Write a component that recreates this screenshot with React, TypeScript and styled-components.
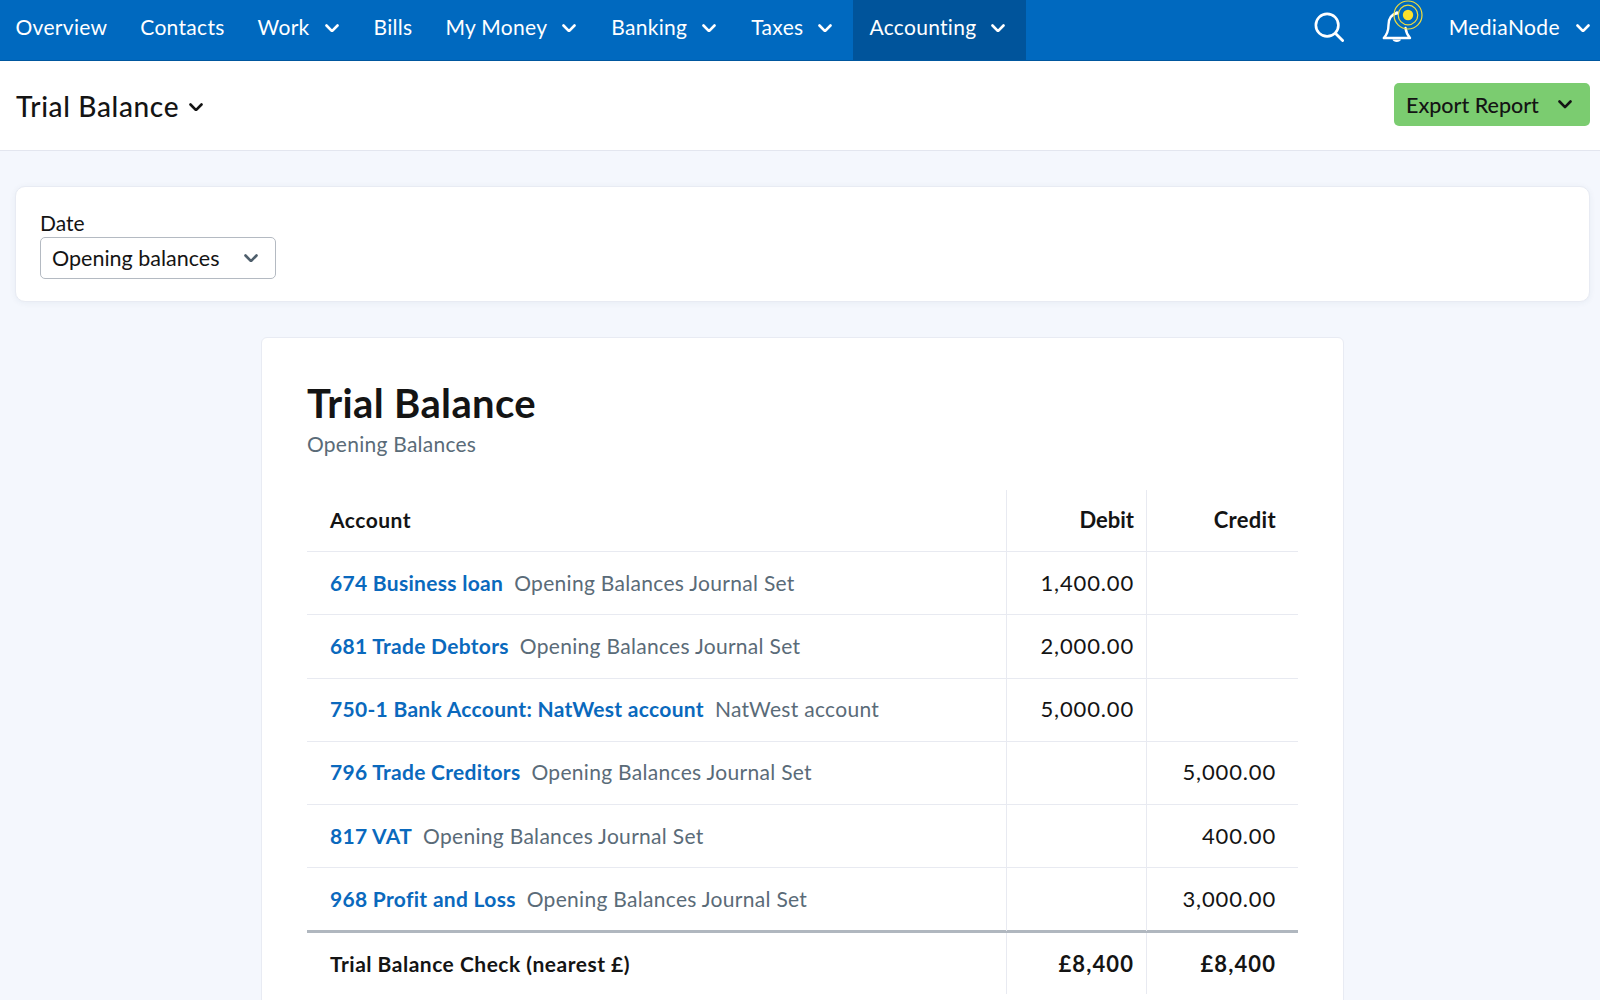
import React from 'react';
import styled, { createGlobalStyle } from 'styled-components';

const GlobalStyle = createGlobalStyle`
    html, body {
        margin: 0;
        padding: 0;
        height: 1000px;
        overflow: hidden;
        background: #f4f7fd;
        font-family: 'Lato', 'Liberation Sans', sans-serif;
        color: #141414;
    }
    * {
        box-sizing: border-box;
    }
`;

const NavBar = styled.nav`
    height: 61px;
    background: #0069bf;
    border-bottom: 1px solid #00579f;
    display: flex;
    align-items: stretch;
    justify-content: space-between;
    padding-right: 10px;
`;

const NavList = styled.div`
    display: flex;
    align-items: stretch;
    margin-left: -1px;
`;

const NavItem = styled.a<{ $active?: boolean }>`
    display: flex;
    align-items: center;
    gap: 15px;
    padding: 0 ${props => (props.$active ? '19px' : '16.5px')} 7px 16.5px;
    margin-left: ${props => (props.$active ? '2px' : '0')};
    font-size: 21px;
    letter-spacing: 0.3px;
    color: #fff;
    background: ${props => (props.$active ? '#00549b' : 'transparent')};
    svg {
        margin: 3px 2px 0 0;
    }
`;

const NavTools = styled.div`
    display: flex;
    align-items: center;
    padding-bottom: 7px;
`;

const SearchWrap = styled.span`
    display: flex;
    margin-right: 36px;
`;

const BellWrap = styled.span`
    display: flex;
    margin-right: 25px;
    margin-top: -9px;
`;

const UserItem = styled.a`
    display: flex;
    align-items: center;
    gap: 16px;
    font-size: 21px;
    letter-spacing: 0.4px;
    color: #fff;
    svg {
        margin-top: 3px;
    }
`;

const PageHead = styled.header`
    height: 90px;
    background: #fff;
    border-bottom: 1px solid #e3e6ef;
    display: flex;
    align-items: center;
    justify-content: space-between;
    padding: 0 10px 0 16px;
`;

const PageTitle = styled.h1`
    margin: 0;
    display: flex;
    align-items: center;
    gap: 10px;
    font-size: 28px;
    font-weight: 500;
    letter-spacing: 0.65px;
    svg {
        margin-top: 3px;
    }
`;

const ExportButton = styled.button`
    width: 196px;
    height: 43px;
    margin-bottom: 2px;
    border: 0;
    border-radius: 5px;
    background: #7bcc70;
    color: #141414;
    font: 500 21.5px 'Lato', sans-serif;
    display: flex;
    align-items: center;
    justify-content: space-between;
    padding: 0 18px 0 12px;
`;

const Main = styled.main`
    padding: 35px 10px 0 15px;
`;

const FilterCard = styled.section`
    height: 116px;
    background: #fff;
    border: 1px solid #e8ebf3;
    border-radius: 10px;
    box-shadow: 0 1px 6px rgba(40, 60, 110, 0.06);
    padding: 23px 23px 0 24px;
`;

const FieldLabel = styled.label`
    display: block;
    font-size: 21px;
    line-height: 25px;
    margin-bottom: 2px;
`;

const SelectBox = styled.div`
    width: 236px;
    height: 42px;
    border: 1px solid #b4bac2;
    border-radius: 5px;
    display: flex;
    align-items: center;
    justify-content: space-between;
    padding: 0 17px 0 11px;
    font-size: 21.5px;
`;

const ReportCard = styled.section`
    width: 1083px;
    height: 700px;
    margin: 35px 0 0 246px;
    background: #fff;
    border: 1px solid #e8ebf3;
    border-radius: 6px;
    padding: 40px 45px 0;
`;

const ReportTitle = styled.h2`
    margin: 0;
    font-size: 40px;
    line-height: 50px;
    font-weight: 700;
    letter-spacing: 0.35px;
`;

const ReportSub = styled.p`
    margin: 2px 0 0;
    font-size: 21px;
    line-height: 28px;
    letter-spacing: 0.25px;
    color: #5a6b78;
`;

const Table = styled.div`
    margin-top: 32px;
    width: 991px;
`;

const Row = styled.div<{ $kind?: 'head' | 'total' }>`
    display: grid;
    grid-template-columns: 699px 140px 152px;
    height: ${props => (props.$kind === 'head' ? '62px' : props.$kind === 'total' ? '64px' : '63.25px')};
    border-bottom: ${props => (props.$kind === 'total' ? '0' : '1.5px solid #e8eaf1')};
    border-top: ${props => (props.$kind === 'total' ? '3px solid #b0b7bf' : '0')};
    margin-top: ${props => (props.$kind === 'total' ? '-1.5px' : '0')};
    font-weight: ${props => (props.$kind ? 700 : 400)};
    & > div {
        padding-bottom: ${props => (props.$kind === 'total' ? '0' : '2px')};
    }
`;

const AccountCell = styled.div<{ $spaced?: boolean }>`
    display: flex;
    align-items: center;
    gap: 11px;
    padding-left: 23px;
    font-size: 21px;
    letter-spacing: ${props => (props.$spaced ? '0.5px' : '0.3px')};
    color: #141414;
`;

const AmountCell = styled.div<{ $last?: boolean; $spacing?: string }>`
    display: flex;
    align-items: center;
    justify-content: flex-end;
    padding-right: ${props => (props.$last ? '22px' : '12px')};
    border-left: 1.5px solid #e8eaf1;
    font-size: 22px;
    letter-spacing: ${props => props.$spacing || '0.85px'};
`;

const AccountLink = styled.a`
    color: #0a69bd;
    font-weight: 700;
`;

const AccountNote = styled.span`
    color: #5a6b78;
`;

const Chevron = ({ color = '#fff', size = 14, width = 2.8 }: { color?: string; size?: number; width?: number }) => (
    <svg width={size} height={size * 0.64} viewBox="0 0 15 9.6" fill="none">
        <path d="M1.6 1.6 L7.5 7.6 L13.4 1.6" stroke={color} strokeWidth={width} strokeLinecap="round" strokeLinejoin="round" />
    </svg>
);

const SearchIcon = () => (
    <svg width="30" height="30" viewBox="0 0 32 32" fill="none">
        <circle cx="14" cy="14" r="12" stroke="#fff" strokeWidth="2.8" />
        <path d="M23 23 L30.5 30.5" stroke="#fff" strokeWidth="3" strokeLinecap="round" />
    </svg>
);

const BellIcon = () => (
    <svg width="44" height="44" viewBox="0 0 44 44" fill="none">
        <path
            d="M17 13 C11 14.500 8.500 19 8.500 25 C8.500 31 7 34.500 3.800 38 L30 38 C27.500 35 26 32 25.500 28"
            stroke="#fff"
            strokeWidth="2.4"
            strokeLinecap="round"
            strokeLinejoin="round"
        />
        <path d="M12.500 39.500 C13 42.800 20.500 42.800 21 39.500 Z" fill="#fff" />
        <circle cx="17" cy="13" r="1.800" fill="#fff" />
        <circle cx="28" cy="15" r="5.200" fill="#fde12d" />
        <circle cx="28" cy="15" r="9.800" stroke="#f1dd3c" strokeWidth="1.200" />
        <circle cx="28" cy="15" r="14" stroke="#f1dd3c" strokeWidth="1.200" />
    </svg>
);

const navItems = [
    { label: 'Overview' },
    { label: 'Contacts' },
    { label: 'Work', menu: true },
    { label: 'Bills' },
    { label: 'My Money', menu: true },
    { label: 'Banking', menu: true },
    { label: 'Taxes', menu: true },
    { label: 'Accounting', menu: true, active: true },
];

const rows = [
    { code: '674 Business loan', note: 'Opening Balances Journal Set', debit: '1,400.00' },
    { code: '681 Trade Debtors', note: 'Opening Balances Journal Set', debit: '2,000.00' },
    { code: '750-1 Bank Account: NatWest account', note: 'NatWest account', debit: '5,000.00' },
    { code: '796 Trade Creditors', note: 'Opening Balances Journal Set', credit: '5,000.00' },
    { code: '817 VAT', note: 'Opening Balances Journal Set', credit: '400.00' },
    { code: '968 Profit and Loss', note: 'Opening Balances Journal Set', credit: '3,000.00' },
];

export default function App() {
    return (
        <>
            <GlobalStyle />
            <NavBar>
                <NavList>
                    {navItems.map(item => (
                        <NavItem key={item.label} $active={item.active}>
                            {item.label}
                            {item.menu && <Chevron />}
                        </NavItem>
                    ))}
                </NavList>
                <NavTools>
                    <SearchWrap>
                        <SearchIcon />
                    </SearchWrap>
                    <BellWrap>
                        <BellIcon />
                    </BellWrap>
                    <UserItem>
                        MediaNode
                        <Chevron />
                    </UserItem>
                </NavTools>
            </NavBar>
            <PageHead>
                <PageTitle>
                    Trial Balance
                    <Chevron color="#141414" size={14} />
                </PageTitle>
                <ExportButton>
                    Export Report
                    <Chevron color="#141414" />
                </ExportButton>
            </PageHead>
            <Main>
                <FilterCard>
                    <FieldLabel>Date</FieldLabel>
                    <SelectBox>
                        Opening balances
                        <Chevron color="#4f5f6c" />
                    </SelectBox>
                </FilterCard>
                <ReportCard>
                    <ReportTitle>Trial Balance</ReportTitle>
                    <ReportSub>Opening Balances</ReportSub>
                    <Table>
                        <Row $kind="head">
                            <AccountCell $spaced>Account</AccountCell>
                            <AmountCell $spacing="0">Debit</AmountCell>
                            <AmountCell $spacing="0.3px" $last>Credit</AmountCell>
                        </Row>
                        {rows.map(row => (
                            <Row key={row.code}>
                                <AccountCell>
                                    <AccountLink>{row.code}</AccountLink>
                                    <AccountNote>{row.note}</AccountNote>
                                </AccountCell>
                                <AmountCell>{row.debit}</AmountCell>
                                <AmountCell $last>{row.credit}</AmountCell>
                            </Row>
                        ))}
                        <Row $kind="total">
                            <AccountCell $spaced>Trial Balance Check (nearest £)</AccountCell>
                            <AmountCell $spacing="1.1px">£8,400</AmountCell>
                            <AmountCell $spacing="1.1px" $last>£8,400</AmountCell>
                        </Row>
                    </Table>
                </ReportCard>
            </Main>
        </>
    );
}
